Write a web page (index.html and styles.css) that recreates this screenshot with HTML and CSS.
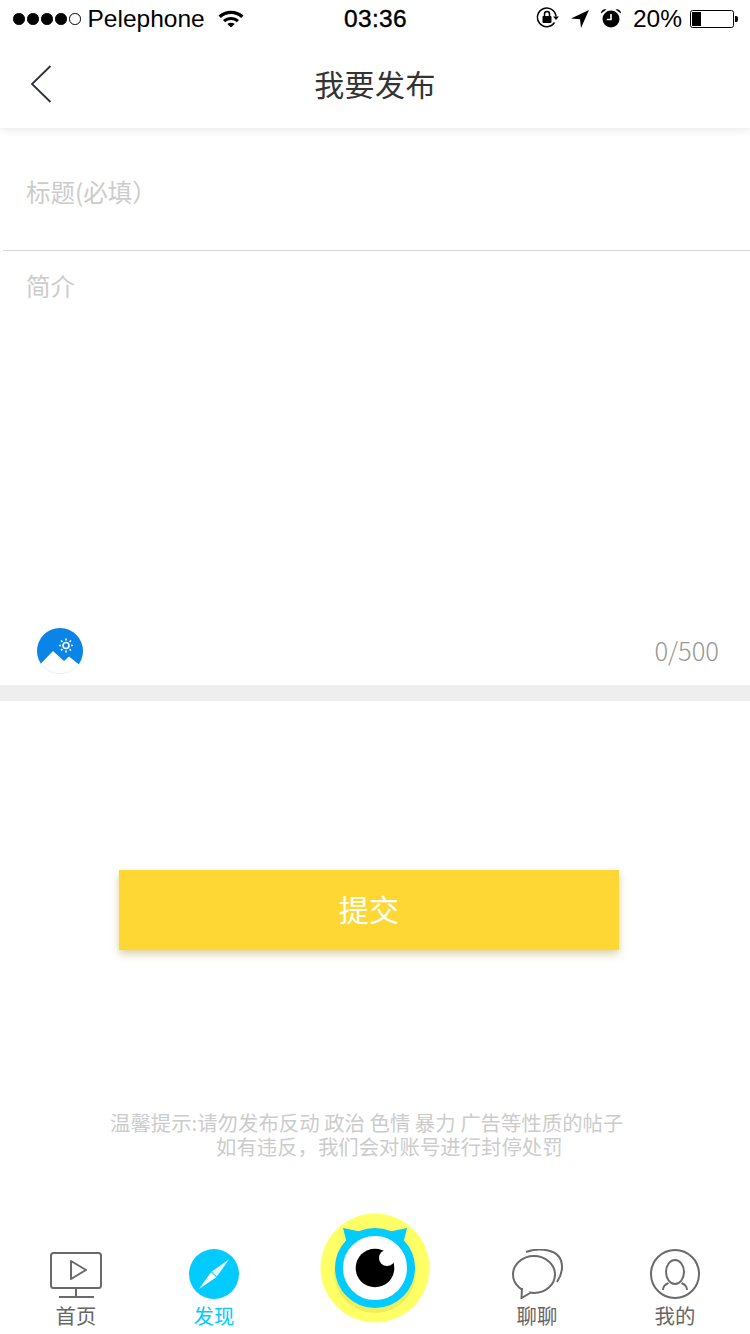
FILE: index.html
```html
<!DOCTYPE html>
<html lang="zh">
<head>
<meta charset="utf-8">
<title>我要发布</title>
<link rel="stylesheet" href="styles.css">
</head>
<body>
<div class="app">
  <header class="status">
    <div class="st-left">
      <div class="signal"><i></i><i></i><i></i><i></i><i class="off"></i></div>
      <span class="carrier">Pelephone</span>
      <svg class="wifi" width="26" height="18" viewBox="0 0 26 18"><path d="M0.500 6.500C7 0 19 0 25.500 6.500L23.200 8.900C17.500 3.800 8.500 3.800 2.800 8.900Z" fill="#000"/><path d="M5 11C9.500 7 16.500 7 21 11L18.800 13.200C15.500 10.300 10.500 10.300 7.200 13.200Z" fill="#000"/><path d="M9.300 15C11.500 13.300 14.500 13.300 16.700 15L13 18.500Z" fill="#000"/></svg>
    </div>
    <div class="time">03:36</div>
    <div class="st-right">
      <svg class="i-lock" width="24" height="22" viewBox="0 0 24 22"><path d="M18.500 15.500A9.300 9.300 0 1 1 20 9.500" fill="none" stroke="#000" stroke-width="1.500"/><path d="M17 9.500h6l-3 3.500z" fill="#000"/><rect x="6.500" y="9" width="9" height="7" rx="1" fill="#000"/><path d="M8.500 9V7a2.500 2.500 0 0 1 5 0v2" fill="none" stroke="#000" stroke-width="1.500"/></svg>
      <svg class="i-loc" width="18" height="18" viewBox="0 0 18 18"><path d="M18 0L0 8.500L9 9.200L10 18Z" fill="#000"/></svg>
      <svg class="i-alarm" width="22" height="20" viewBox="0 0 22 20"><circle cx="11" cy="11" r="8.500" fill="#000"/><path d="M1 5.500A4 4 0 0 1 6.500 1.500ZM21 5.500A4 4 0 0 0 15.500 1.500Z" fill="#000"/><path d="M11 6v5.500H6.800" fill="none" stroke="#fff" stroke-width="1.600"/></svg>
      <span class="pct">20%</span>
      <div class="battery"><div class="b-shell"><div class="b-fill"></div></div><div class="b-tip"></div></div>
    </div>
  </header>

  <nav class="nav">
    <svg class="back" width="22" height="38" viewBox="0 0 22 38"><path d="M20.500 1L2 19L20.500 37" fill="none" stroke="#2e3038" stroke-width="1.800"/></svg>
    <h1 class="nav-title">我要发布</h1>
  </nav>

  <section class="form">
    <div class="title-row">标题(必填）</div>
    <div class="desc-row">
      <div class="desc-ph">简介</div>
      <div class="desc-foot">
        <svg class="pic" width="46" height="46" viewBox="0 0 46 46">
          <defs><clipPath id="disc"><circle cx="23" cy="23" r="23"/></clipPath></defs>
          <circle cx="23" cy="23" r="22.700" fill="#fff" stroke="#d5e6f5" stroke-width=".6"/>
          <path clip-path="url(#disc)" d="M0 0H46V36L42 36.500L32 28.500L27 33L16 23L3.500 36L0 37Z" fill="#0a84e6"/>
          <circle cx="29" cy="17.500" r="3" fill="none" stroke="#fff" stroke-width="1.600"/>
          <path d="M29 10.500v2M29 22.500v2M22 17.500h2M34 17.500h2M24 12.500l1.400 1.400M32.600 21.100l1.400 1.400M24 22.500l1.400-1.400M32.600 13.900l1.400-1.400" stroke="#fff" stroke-width="1.600"/>
        </svg>
        <span class="count">0/500</span>
      </div>
    </div>
  </section>
  <div class="band"></div>

  <main class="body">
    <button class="submit" type="button">提交</button>
    <p class="hint">温馨提示:请勿发布反动 政治 色情 暴力 广告等性质的帖子</p>
    <p class="hint hint-2">如有违反，我们会对账号进行封停处罚</p>
  </main>

  <footer class="tabs">
    <div class="tab tab-home">
      <svg class="tab-icon" width="52" height="46" viewBox="0 0 52 46"><rect x="1" y="1" width="50" height="35" rx="2.500" fill="none" stroke="#6a6a6a" stroke-width="2"/><path d="M21 9L36 18L21 27Z" fill="none" stroke="#6a6a6a" stroke-width="2" stroke-linejoin="round"/><path d="M26 36v9M9 45h35" stroke="#6a6a6a" stroke-width="2"/></svg>
      <span class="tab-label">首页</span>
    </div>
    <div class="tab tab-find">
      <svg class="tab-icon" width="50" height="50" viewBox="0 0 50 50"><circle cx="25" cy="25" r="25" fill="#03cbff"/><path d="M40 10.500L27.800 27.600L22.600 22.600Z" fill="#fff" opacity=".9"/><path d="M10 40L22 23.300L27.200 28.300Z" fill="#fff"/></svg>
      <span class="tab-label active">发现</span>
    </div>
    <div class="tab tab-eye">
      <svg width="110" height="110" viewBox="0 0 110 110"><circle cx="55" cy="55" r="54.500" fill="#ffff66"/><circle cx="55" cy="59" r="41" fill="#eeee5c"/><path d="M23 15L42 19L27 31ZM87 15L68 19L83 31Z" fill="#03cbff"/><circle cx="55" cy="55" r="36" fill="#fff" stroke="#03cbff" stroke-width="8"/><circle cx="55" cy="55" r="19.300" fill="#000"/><circle cx="67" cy="45" r="8" fill="#fff"/></svg>
    </div>
    <div class="tab tab-chat">
      <svg class="tab-icon" width="52" height="50" viewBox="0 0 52 50"><ellipse cx="23" cy="25.500" rx="21" ry="18.500" fill="none" stroke="#6a6a6a" stroke-width="2"/><path d="M11 39L10.500 49L20 43.500" fill="#fff" stroke="#6a6a6a" stroke-width="2"/><path d="M15 3C26 -1 51 -2 51 18C51 25 48 30 46 33" fill="none" stroke="#6a6a6a" stroke-width="2"/></svg>
      <span class="tab-label">聊聊</span>
    </div>
    <div class="tab tab-me">
      <svg class="tab-icon" width="50" height="50" viewBox="0 0 50 50"><circle cx="25" cy="25" r="24" fill="none" stroke="#6a6a6a" stroke-width="2"/><ellipse cx="25" cy="23" rx="9" ry="12" fill="none" stroke="#6a6a6a" stroke-width="2"/><path d="M13 41C13 37 15 36 18.500 34M37 41C37 37 35 36 31.500 34" fill="none" stroke="#6a6a6a" stroke-width="2"/></svg>
      <span class="tab-label">我的</span>
    </div>
  </footer>
</div>
</body>
</html>
```
FILE: styles.css
```css
* { box-sizing: border-box; margin: 0; padding: 0; }
html, body { width: 750px; height: 1334px; overflow: hidden; background: #fff; }
body { font-family: "Noto Sans CJK SC", "Liberation Sans", sans-serif; }
.app { width: 750px; height: 1334px; display: flex; flex-direction: column; position: relative; }

.status { height: 40px; display: grid; grid-template-columns: 1fr auto 1fr; align-items: center; padding: 0 12px 2px 13px; color: #000; font-family: "Liberation Sans", sans-serif; position: relative; z-index: 2; background: #fff; }
.st-left { display: flex; align-items: center; }
.signal { display: flex; gap: 2.500px; margin-right: 7px; }
.signal i { width: 11.500px; height: 11.500px; border-radius: 50%; background: #000; border: 1px solid #000; }
.signal i.off { background: transparent; }
.carrier { font-size: 24.500px; }
.wifi { margin-left: 13px; margin-top: -3px; }
.time { font-size: 24.500px; letter-spacing: .3px; font-weight: 400; -webkit-text-stroke: .4px #000; }
.st-right { display: flex; align-items: center; justify-content: flex-end; }
.i-lock { margin-right: 11px; margin-top: -2px; }
.i-loc { margin-right: 11px; }
.i-alarm { margin-right: 11px; margin-top: -2px; }
.pct { font-size: 24.500px; margin-right: 8px; }
.battery { display: flex; align-items: center; }
.b-shell { width: 44px; height: 18px; border: 1px solid #000; border-radius: 2.500px; padding: 1px; }
.b-fill { width: 9px; height: 14px; background: #000; }
.b-tip { width: 3px; height: 6px; background: #000; margin-left: 1px; border-radius: 0 2px 2px 0; }

.nav { height: 88px; display: flex; align-items: center; justify-content: center; position: relative; z-index: 1; background: #fff; box-shadow: 0 2px 8px rgba(0,0,0,.09); }
.back { position: absolute; left: 30px; top: 25px; }
.nav-title { font-size: 30px; font-weight: 400; color: #333; line-height: 1; letter-spacing: .4px; margin-top: -2px; }

.form { height: 557px; display: flex; flex-direction: column; }
.title-row { height: 123px; margin-left: 3px; padding: 47px 0 0 23px; border-bottom: 1px solid #d8d8d8; font-size: 24.500px; line-height: 34px; color: #ccc; }
.desc-row { flex: 1; padding: 18px 31px 11px 37px; display: flex; flex-direction: column; justify-content: space-between; }
.desc-ph { font-size: 24.500px; line-height: 34px; color: #ccc; margin-left: -11px; }
.desc-foot { display: flex; align-items: center; justify-content: space-between; }
.pic { display: block; }
.count { font-size: 25.500px; color: #999; font-weight: 300; margin-bottom: 0; line-height: 34px; margin-top: -2px; margin-right: 0; }

.band { height: 16px; background: #eee; }

.body { flex: 1; display: flex; flex-direction: column; align-items: flex-start; padding: 169px 0 0 110px; }
.submit { margin-left: 9px; width: 500px; height: 80px; padding-bottom: 4px; border: 0; background: #ffd735; color: #fff; font: 400 30px/1 "Noto Sans CJK SC", sans-serif; letter-spacing: .3px; box-shadow: 0 4px 8px rgba(170,140,30,.4); }
.hint { font-size: 20.400px; line-height: 24px; color: #ccc; white-space: nowrap; }
.submit + .hint { margin-top: 160px; }
.hint-2 { margin-left: 106px; }

.tabs { height: 125px; display: flex; position: relative; }
.tab { position: absolute; bottom: 7px; display: flex; flex-direction: column; align-items: center; width: 100px; }
.tab-icon { display: block; }
.tab-label { font-size: 20.400px; line-height: 24px; color: #666; margin-top: 4px; }
.tab-label.active { color: #03cbff; }
.tab-home { left: 26px; }
.tab-home .tab-label { margin-top: 5px; }
.tab-find { left: 164px; }
.tab-eye { left: 320px; width: 110px; top: 4px; bottom: auto; }
.tab-chat { left: 487px; }
.tab-me { left: 625px; }
```
